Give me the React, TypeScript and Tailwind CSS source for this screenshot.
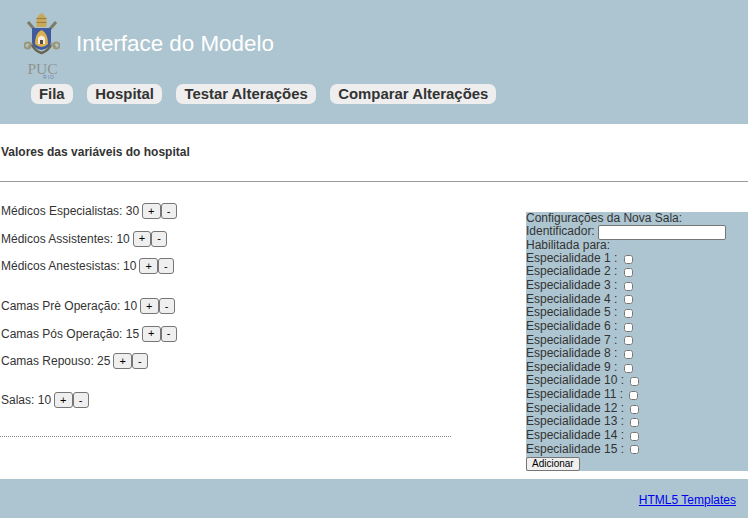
const navItems = ['Fila', 'Hospital', 'Testar Alterações', 'Comparar Alterações'];

const groups = [
  [
    { label: 'Médicos Especialistas', value: 30 },
    { label: 'Médicos Assistentes', value: 10 },
    { label: 'Médicos Anestesistas', value: 10 },
  ],
  [
    { label: 'Camas Prè Operação', value: 10 },
    { label: 'Camas Pós Operação', value: 15 },
    { label: 'Camas Repouso', value: 25 },
  ],
  [{ label: 'Salas', value: 10 }],
];

const specialties = Array.from({ length: 15 }, (_, i) => i + 1);

const PucLogo = () => (
  <div className="w-[36px] h-[68px] flex flex-col items-center">
    <svg width="36" height="51" viewBox="0 0 36 51" className="shrink-0 blur-[0.4px]">
      {/* crossed keys */}
      <path d="M4 10 L11 18 M32 10 L25 18" stroke="#7d7a68" strokeWidth="3" />
      <path d="M9 31 L4 35 M27 31 L32 35" stroke="#a39c7c" strokeWidth="2" />
      <circle cx="3.5" cy="33.5" r="3" fill="none" stroke="#9c9678" strokeWidth="2" />
      <circle cx="32.5" cy="33.5" r="3" fill="none" stroke="#9c9678" strokeWidth="2" />
      {/* tiara */}
      <path d="M12.5 15 L12.5 8 Q13 4 17.5 1 Q22 4 22.5 8 L22.5 15 Z" fill="#c8a95c" />
      <path d="M12.5 6.5 H22.5 M12.5 10.5 H22.5" stroke="#9a7d3c" strokeWidth="1" />
      {/* shield */}
      <path d="M8 16 H27 V30 Q27 36 17.5 38 Q8 36 8 30 Z" fill="#3f5b9e" />
      <path d="M11 32 Q11 21 17.5 18 Q24 21 24 32 Q21 35 17.5 35 Q14 35 11 32 Z" fill="#dcaf52" />
      <path d="M14 32 V26 Q17.5 21 21 26 V32 Z" fill="#f2eee2" />
      <rect x="16" y="28" width="3" height="4" fill="#5c4a3a" />
      {/* motto ring */}
      <path d="M8 33 Q11 39 17.5 41 Q24 39 27 33" fill="none" stroke="#66654f" strokeWidth="2.5" />
    </svg>
    <div className="pl-[1px] font-['Liberation_Serif',serif] text-[15.5px] leading-[12px] text-[#8f9490]">PUC</div>
    <div className="self-end mr-[5px] font-['Liberation_Sans',sans-serif] text-[5px] leading-[5px] text-[#6d83b5] tracking-[1px]">RIO</div>
  </div>
);

const Stepper = ({ label, value }: { label: string; value: number }) => (
  <div className="h-[16px] flex items-center">
    <span>
      {label}: {value}
    </span>
    <button className="ml-[3px] h-[16px] min-w-[18px] px-[5px] text-[11px] leading-none text-black bg-[#efefef] border border-[#767676] rounded-[3px]">
      +
    </button>
    <button className="h-[16px] min-w-[16px] px-[5px] text-[11px] leading-none text-black bg-[#efefef] border border-[#767676] rounded-[3px]">
      -
    </button>
  </div>
);

export default function App() {
  return (
    <div className="w-[748px] h-[518px] overflow-hidden bg-white font-['Liberation_Sans',Arial,sans-serif] text-[12px] text-[#333]">
      <header className="h-[124px] bg-[#adc5d0] pt-[12px]">
        <div className="flex pl-[24px]">
          <PucLogo />
          <h1 className="ml-[16px] mt-[18px] text-[22.4px] leading-[28px] font-normal text-white">Interface do Modelo</h1>
        </div>
        <nav className="flex gap-[14.5px] pl-[31px] mt-[4px]">
          {navItems.map((item) => (
            <a key={item} className="h-[20px] px-[8px] rounded-[7px] bg-[#eeeeee] text-[14.9px] leading-[20px] font-bold text-[#333]">
              {item}
            </a>
          ))}
        </nav>
      </header>

      <main className="h-[355px]">
        <h2 className="pl-[1px] pt-[21px] text-[12px] leading-[14px] font-bold">Valores das variáveis do hospital</h2>
        <hr className="mt-[22px] border-t border-[#999]" />
        <div className="flex justify-between">
          <div className="w-[451px] pl-[1px] pt-[21px]">
            <div className="flex flex-col gap-[11.5px]">
              {groups[0].map((row) => (
                <Stepper key={row.label} {...row} />
              ))}
            </div>
            <div className="flex flex-col gap-[11.5px] mt-[24px]">
              {groups[1].map((row) => (
                <Stepper key={row.label} {...row} />
              ))}
            </div>
            <div className="mt-[23px]">
              <Stepper {...groups[2][0]} />
            </div>
            <hr className="-ml-[1px] mt-[28px] border-t border-dotted border-[#888]" />
          </div>
          <aside className="w-[222px] h-[259px] mt-[30px] bg-[#adc5d0] text-[12px] leading-[13.7px]">
            <div>Configurações da Nova Sala:</div>
            <div className="flex items-center h-[13px]">
              Identificador:
              <input className="ml-[3px] w-[128px] h-[15px] px-[2px] bg-white border border-[#767676] rounded-[2px]" />
            </div>
            <div className="h-[13px]">Habilitada para:</div>
            {specialties.map((n) => (
              <div key={n} className="flex items-center h-[13.65px]">
                Especialidade {n} :
                <input type="checkbox" className={n > 9 ? 'ml-[6px] mt-[1px] w-[9px] h-[9px]' : 'ml-[7px] mt-[1px] w-[9px] h-[9px]'} />
              </div>
            ))}
            <button className="block mt-[1px] h-[14px] px-[5px] text-[10px] leading-none text-black bg-[#efefef] border border-[#767676] rounded-[2px]">
              Adicionar
            </button>
          </aside>
        </div>
      </main>

      <footer className="h-[39px] bg-[#adc5d0] flex items-center justify-end pr-[12px]">
        <a href="#" className="mt-[3px] text-[12px] text-[#0000ee] underline">HTML5 Templates</a>
      </footer>
    </div>
  );
}
